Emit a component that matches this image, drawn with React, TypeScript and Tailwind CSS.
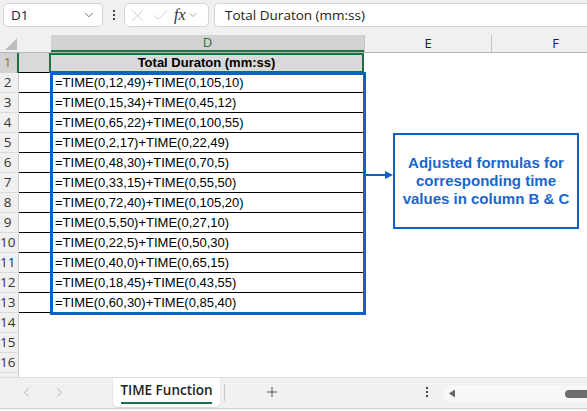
import { X, Check, ChevronDown, ChevronLeft, ChevronRight, Plus } from 'lucide-react'

const formulas = [
  '=TIME(0,12,49)+TIME(0,105,10)',
  '=TIME(0,15,34)+TIME(0,45,12)',
  '=TIME(0,65,22)+TIME(0,100,55)',
  '=TIME(0,2,17)+TIME(0,22,49)',
  '=TIME(0,48,30)+TIME(0,70,5)',
  '=TIME(0,33,15)+TIME(0,55,50)',
  '=TIME(0,72,40)+TIME(0,105,20)',
  '=TIME(0,5,50)+TIME(0,27,10)',
  '=TIME(0,22,5)+TIME(0,50,30)',
  '=TIME(0,40,0)+TIME(0,65,15)',
  '=TIME(0,18,45)+TIME(0,43,55)',
  '=TIME(0,60,30)+TIME(0,85,40)',
]

const ui = { fontFamily: '"Open Sans", "Noto Sans", sans-serif' }
const cell = { fontFamily: '"Liberation Sans", Arial, sans-serif' }

function RowNum({ n, selected }: { n: number; selected?: boolean }) {
  return (
    <div
      className={
        selected
          ? 'w-[19px] shrink-0 h-full flex items-center bg-[#d2d2d2] border-r-2 border-r-[#1e7145] text-[#9a7418]'
          : 'w-[19px] shrink-0 h-full flex items-center bg-[#f0f0f0] border-r border-r-[#c8c8c8] border-b border-b-[#dadada] text-[#333]'
      }
      style={ui}
    >
      <span className="w-[15px] text-center text-[13.5px] leading-none">{n}</span>
    </div>
  )
}

export default function App() {
  return (
    <div className="relative w-[587px] h-[411px] overflow-hidden bg-white flex flex-col">
      {/* formula bar */}
      <div className="h-[35px] shrink-0 bg-[#f0f0f0] flex items-start pt-[3px] pl-[3px]" style={ui}>
        <div className="w-[100px] h-[24px] bg-white border border-[#d4d4d4] rounded-[5px] flex items-center justify-between pl-[7px] pr-[6px]">
          <span className="text-[13.5px] text-[#222]">D1</span>
          <ChevronDown size={14} strokeWidth={1.4} className="text-[#555]" />
        </div>
        <div className="w-[21px] h-[24px] flex flex-col items-center justify-center gap-[2px]">
          <span className="w-[2px] h-[2px] bg-[#444]" />
          <span className="w-[2px] h-[2px] bg-[#444]" />
          <span className="w-[2px] h-[2px] bg-[#444]" />
        </div>
        <div className="w-[85px] h-[24px] bg-white border border-[#d4d4d4] rounded-[5px] flex items-center pl-[3px] gap-[4px]">
          <X size={19} strokeWidth={0.9} className="text-[#b4b4b4]" />
          <Check size={19} strokeWidth={0.9} className="text-[#b4b4b4]" />
          <span className="text-[16px] italic text-[#333] leading-none" style={{ fontFamily: '"Liberation Serif", serif' }}>
            fx
          </span>
          <ChevronDown size={12} strokeWidth={1.3} className="text-[#777] -ml-[3px]" />
        </div>
        <div className="ml-[5px] flex-1 h-[24px] bg-white border border-[#d4d4d4] border-r-0 rounded-l-[5px] flex items-center pl-[10px]">
          <span className="text-[13.5px] text-[#222]">Total Duraton (mm:ss)</span>
        </div>
      </div>

      {/* column headers */}
      <div className="h-[18px] shrink-0 flex bg-[#f0f0f0] border-b border-[#b8b8b8]" style={ui}>
        <div className="w-[19px] shrink-0 h-full relative">
          <div
            className="absolute right-[2px] bottom-[2px] w-[12px] h-[12px] bg-[#bdbdbd]"
            style={{ clipPath: 'polygon(100% 0, 100% 100%, 0 100%)' }}
          />
        </div>
        <div className="w-[32px] shrink-0 h-full" />
        <div className="w-[313px] shrink-0 h-full bg-[#d2d2d2] border-b-2 border-[#1e7145] flex items-center justify-center text-[13px] text-[#1e7145]">
          D
        </div>
        <div className="w-[127px] shrink-0 h-full border-l border-[#c4c4c4] flex items-center justify-center text-[13px] text-[#222]">
          E
        </div>
        <div className="w-[128px] shrink-0 h-full border-l border-[#c4c4c4] flex items-center justify-center text-[13px] text-[#222]">
          F
        </div>
      </div>

      {/* row 1 */}
      <div className="h-[20px] shrink-0 flex">
        <RowNum n={1} selected />
        <div className="w-[30px] shrink-0 h-full bg-[#d9d9d9] border-b border-black" />
        <div
          className="w-[315px] shrink-0 h-full bg-[#d9d9d9] border-2 border-[#1e7145] flex items-center justify-center text-[13px] font-bold text-black"
          style={cell}
        >
          Total Duraton (mm:ss)
        </div>
      </div>

      {/* rows 2-13 */}
      {formulas.map((f, i) => (
        <div key={i} className="h-[20px] shrink-0 flex">
          <RowNum n={i + 2} />
          <div className="w-[32px] shrink-0 h-full border-b border-black" />
          <div
            className="w-[313px] shrink-0 h-full border-b border-r border-black flex items-center pl-[4px] text-[13px] text-black"
            style={cell}
          >
            {f}
          </div>
        </div>
      ))}

      {/* empty rows */}
      {[14, 15, 16].map((n) => (
        <div key={n} className="h-[20px] shrink-0 flex">
          <RowNum n={n} />
        </div>
      ))}
      <div className="h-[4px] shrink-0 flex">
        <div className="w-[19px] bg-[#f0f0f0] border-r border-[#c8c8c8]" />
      </div>

      {/* sheet tabs */}
      <div className="flex-1 bg-[#f0f0f0] border-t border-[#dcdcdc] flex items-start relative" style={ui}>
        <div className="flex items-center gap-[18px] pl-[19px] pt-[7px] text-[#a8a8a8]">
          <ChevronLeft size={15} strokeWidth={1.4} />
          <ChevronRight size={15} strokeWidth={1.4} />
        </div>
        <div className="ml-[46px] h-[29px] w-[107px] bg-white rounded-b-[5px] shadow-[0_1px_2px_rgba(0,0,0,0.12)] flex flex-col items-center pt-[3px]">
          <span className="text-[13.5px] font-semibold text-[#222] leading-[18px]">TIME Function</span>
          <span className="w-[91px] h-[2px] bg-[#1e7145] mt-[3px]" />
        </div>
        <div className="ml-[4px] mt-[6px] w-px h-[17px] bg-[#c8c8c8]" />
        <div className="ml-[39px] pt-[6px] text-[#444]">
          <Plus size={16} strokeWidth={1.3} />
        </div>
        <div className="ml-[146px] pt-[9px] flex flex-col items-center gap-[2px]">
          <span className="w-[2px] h-[2px] bg-[#444]" />
          <span className="w-[2px] h-[2px] bg-[#444]" />
          <span className="w-[2px] h-[2px] bg-[#444]" />
        </div>
        <div className="ml-[15px] mt-[7px] flex-1 h-[17px] bg-[#f7f7f7] rounded-l-full flex items-center pl-[6px] justify-between">
          <span
            className="w-[6px] h-[8px] bg-[#666]"
            style={{ clipPath: 'polygon(100% 0, 100% 100%, 0 50%)' }}
          />
          <span className="w-[26px] h-[8px] bg-[#6c6c6c] rounded-l-full -mr-[4px]" />
        </div>
        <div className="absolute left-0 right-0 bottom-0 h-[3px] bg-[#f8f8f8] border-t border-[#cfcfcf]" />
      </div>

      {/* selection outline D2:D13 */}
      <div className="absolute left-[50px] top-[72px] w-[316px] h-[243px] border-[3px] border-[#0a62c9] pointer-events-none" />

      {/* arrow */}
      <div className="absolute left-[366px] top-[174px] w-[21px] h-[2px] bg-[#0a62c9]" />
      <div
        className="absolute left-[385px] top-[171px] w-[8px] h-[8px] bg-[#0a62c9]"
        style={{ clipPath: 'polygon(0 0, 100% 50%, 0 100%)' }}
      />

      {/* callout */}
      <div
        className="absolute left-[393px] top-[133px] w-[186px] h-[96px] border-2 border-[#0a62c9] bg-white flex items-center justify-center text-center text-[15px] font-bold leading-[18px] text-[#1a66cc]"
        style={cell}
      >
        Adjusted formulas for
        <br />
        corresponding time
        <br />
        values in column B &amp; C
      </div>
    </div>
  )
}
